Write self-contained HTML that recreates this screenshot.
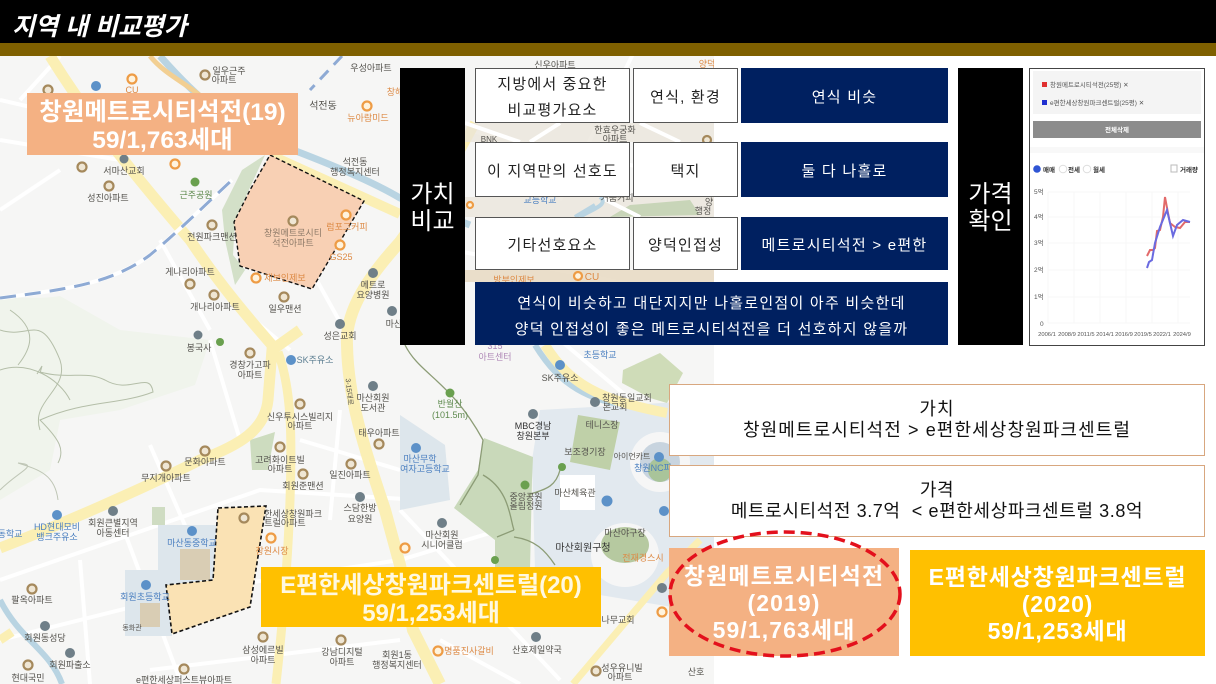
<!DOCTYPE html>
<html lang="ko"><head><meta charset="utf-8"><title>지역 내 비교평가</title>
<style>
html,body{margin:0;padding:0;background:#fff}
body{width:1216px;height:684px;overflow:hidden;position:relative;font-family:"Liberation Sans","Noto Sans CJK KR",sans-serif}
.a{position:absolute;box-sizing:border-box;display:flex;align-items:center;justify-content:center;text-align:center;white-space:nowrap}
.w{background:#fff;border:1px solid #555;color:#222;font-size:15px;line-height:26px;letter-spacing:1.2px;padding-top:4px}
.n{background:#002060;color:#fff;font-size:15px;line-height:26px;letter-spacing:1.25px;padding-top:4px}
.k{background:#000;color:#fff;font-size:24px;line-height:27px;padding-top:3px}
.o{background:#fff;border:1px solid #d8a77f;color:#111;font-size:18px;line-height:21px;letter-spacing:1.1px}
.b{color:#fff;font-weight:700;padding-top:3px}
svg text{font-family:"Liberation Sans","Noto Sans CJK KR",sans-serif}
#m text{font-size:9px;fill:#55534e;text-anchor:middle}
#m .or{fill:#dd8a45}#m .bl{fill:#4a7fc0}#m .gr{fill:#5e8a4e}#m .pu{fill:#b08ab8}
#m .p{fill:#efe6d4;stroke:#a5895c;stroke-width:2.2}
#m .q{fill:#fff3dd;stroke:#ee9c45;stroke-width:2.2}
#m .u{fill:#5c91c8;stroke:#5c91c8;stroke-width:1}
#m .g{fill:#6f7f88;stroke:#6f7f88;stroke-width:1}
#m .t{fill:#6aa04f}
</style></head><body>

<svg id="m" style="position:absolute;left:0;top:56px;filter:blur(.35px)" width="714" height="628" viewBox="0 56 714 628">
<rect x="0" y="56" width="714" height="628" fill="#f6f6f5"/>
<!-- hill -->
<path d="M0 298C20 296 35 300 60 296L120 330L210 340L195 385L120 410L60 420L50 470L0 500Z" fill="#f0f4ec"/>
<path d="M0 330C30 340 40 310 60 360C70 390 30 400 40 430M0 370C30 360 60 380 70 400M10 310C40 330 30 350 18 365M40 373L42 366L37 374M40 372C70 380 85 370 105 380C130 395 150 370 153 392C120 405 85 400 40 420C60 440 65 450 58 463" fill="none" stroke="#b4bea8" stroke-width="1"/>
<path d="M0 490C20 470 40 465 18 463C40 470 55 475 58 500" fill="none" stroke="#bfc6b6" stroke-width="1"/>
<!-- white streets -->
<g fill="none" stroke="#fff" stroke-width="4">
<path d="M0 100L130 130M0 140L120 160M60 56L20 100M0 210L60 170M160 240L210 330M210 340L240 440M300 250L350 340M230 300L290 350M150 445L200 560M0 640L200 590L400 560L500 530M120 520L180 680M0 580L260 490L420 500M80 560L90 684M150 670L400 640M300 440L400 470M340 410L330 520M400 510L560 680M440 640L520 684M600 560L714 420M620 470L600 560M560 340L714 470M640 40L560 200M420 120L700 180M400 240L714 300"/>
</g>
<!-- stream -->
<path d="M160 56C190 90 230 130 280 145C320 160 370 180 400 198L470 225" fill="none" stroke="#b9d4e2" stroke-width="7"/>
<path d="M0 600C20 640 50 650 62 684M535 345C560 385 590 410 680 410" fill="none" stroke="#b9d4e2" stroke-width="6"/>
<!-- school/sports -->
<path d="M400 415L445 445L450 500L400 510Z" fill="#dde6ec"/>
<path d="M540 410L714 400V600L690 610L570 590L535 570L532 460Z" fill="#e2e9ef"/>
<rect x="158" y="525" width="60" height="60" fill="#dde6ec"/><rect x="125" y="570" width="47" height="66" fill="#dde6ec"/>
<rect x="180" y="549" width="30" height="31" fill="#d9cdb4"/><rect x="140" y="603" width="20" height="24" fill="#d9cdb4"/>
<rect x="152" y="507" width="13" height="18" fill="#cfdcc2"/>
<path d="M623 370L660 353L683 373L667 403L650 398L622 383Z" fill="#cfdcb8"/>
<path d="M578 415L620 422L610 470L570 462Z" fill="#bfd0a8"/>
<rect x="560" y="475" width="35" height="35" fill="#fff"/>
<circle cx="660" cy="462" r="30" fill="#f6f6f6"/><circle cx="660" cy="462" r="20" fill="#c8d4df"/><circle cx="660" cy="470" r="12" fill="#a9c49a"/>
<ellipse cx="625" cy="555" rx="34" ry="32" fill="#f6f6f6"/><ellipse cx="625" cy="545" rx="24" ry="18" fill="#b6c9a0"/>
<!-- green -->
<path d="M484 438L533 457L532 480L530 570L495 570L495 540L454 508L478 470Z" fill="#c9d9ba"/>
<path d="M222 210L242 170L265 155L235 220L233 255L245 270L235 285L225 240Z" fill="#d3e0c8"/>
<path d="M250 440L275 432L268 470H252Z" fill="#cddcbf"/>
<path d="M405 345C420 375 450 380 483 440L478 475L460 505M483 475C510 490 510 520 514 530M514 530L497 537M514 537C535 540 545 550 555 565M528 495C540 490 555 490 560 470" fill="none" stroke="#8c9c76" stroke-width="1.3"/>
<!-- yellow roads -->
<g fill="none" stroke="#fbefb4" stroke-linecap="butt">
<path d="M50 56C90 120 130 170 190 240C220 285 250 320 278 352" stroke-width="11"/>
<path d="M0 548C60 525 140 490 200 460C240 445 265 430 268 400L272 350L300 330" stroke-width="11"/>
<path d="M278 352C292 390 292 440 290 500C288 560 283 620 276 684" stroke-width="9"/>
<path d="M400 242C370 275 345 310 347 345C348 400 365 450 385 510L400 565L413 630L440 684" stroke-width="12"/>
<path d="M270 155L400 214" stroke-width="10"/>
<path d="M400 242L445 180" stroke-width="12"/>
<path d="M545 345C570 385 600 400 667 413" stroke-width="10"/>
<path d="M573 684L667 573L700 540" stroke-width="7"/>
<path d="M0 640L12 632" stroke-width="9"/>
</g>
<path d="M150 56C165 75 190 85 205 100" fill="none" stroke="#f2cf92" stroke-width="5"/>
<path d="M400 250C420 220 450 170 475 123" fill="none" stroke="#fbefb4" stroke-width="10"/>
<!-- beige blocks right -->
<path d="M465 123H714V142H465ZM465 197H714V217H465Z" fill="#e9e4da" opacity=".75"/>
<path d="M465 270H714V282H465Z" fill="#e7d9c2" opacity=".85"/>
<path d="M630 205L690 200L700 215L610 217Z" fill="#c8d5b8"/>
<path d="M465 123L520 142M560 123L530 142M640 123L680 142M600 197L640 217" stroke="#fff" stroke-width="4" fill="none"/>
<path d="M595 205L575 217M600 197C610 205 590 210 580 217" stroke="#b9d4e2" stroke-width="4" fill="none"/>
<!-- rail -->
<path d="M0 298C60 290 110 285 150 255C180 230 205 205 232 180" fill="none" stroke="#fff" stroke-width="4"/>
<path d="M0 298C60 290 110 285 150 255C180 230 205 205 232 180" fill="none" stroke="#8eaad4" stroke-width="3" stroke-dasharray="16 9"/>
<path d="M342 56L310 90" fill="none" stroke="#8eaad4" stroke-width="3" stroke-dasharray="12 8"/>
<!-- polygons -->
<path d="M270 155L364 201L312 289L240 266L234 222L250 190Z" fill="#f8d0b4" stroke="#111" stroke-width="1.4" stroke-dasharray="4 2.5"/>
<path d="M218 508L266 506L250 607L172 634L166 585L213 580Z" fill="#fae2b4" stroke="#111" stroke-width="1.6" stroke-dasharray="4 2.5"/>
<!-- markers -->
<circle class="p" cx="205" cy="75" r="4.5"/><circle class="q" cx="132" cy="79" r="4.5"/><circle class="p" cx="48" cy="90" r="4.5"/><circle class="u" cx="96" cy="86" r="4.5"/><circle class="q" cx="367" cy="106" r="4.5"/><circle class="g" cx="124" cy="159" r="4"/><circle class="p" cx="82" cy="167" r="4.5"/><circle class="q" cx="175" cy="164" r="4.5"/><circle class="p" cx="109" cy="186" r="4.5"/><circle class="t" cx="195" cy="182" r="4.5"/><circle class="p" cx="212" cy="225" r="4.5"/><circle class="p" cx="293" cy="221" r="4.5"/><circle class="q" cx="346" cy="215" r="4.5"/><circle class="q" cx="340" cy="245" r="4.5"/><circle class="q" cx="256" cy="278" r="4.5"/><circle class="p" cx="190" cy="284" r="4.5"/><circle class="p" cx="214" cy="295" r="4.5"/><circle class="p" cx="284" cy="297" r="4.5"/><circle class="g" cx="373" cy="273" r="4.5"/><circle class="g" cx="340" cy="324" r="4.5"/><circle class="g" cx="392" cy="311" r="4.5"/><circle class="g" cx="198" cy="335" r="4"/><circle class="t" cx="220" cy="342" r="4"/><circle class="p" cx="250" cy="353" r="4.5"/><circle class="u" cx="291" cy="360" r="4.5"/><circle class="g" cx="373" cy="386" r="4.5"/><circle class="p" cx="379" cy="444" r="4.5"/><circle class="p" cx="300" cy="404" r="4.5"/><circle class="p" cx="280" cy="447" r="4.5"/><circle class="p" cx="303" cy="474" r="4.5"/><circle class="p" cx="351" cy="464" r="4.5"/><circle class="p" cx="205" cy="451" r="4.5"/><circle class="p" cx="166" cy="466" r="4.5"/><circle class="g" cx="360" cy="497" r="4.5"/><circle class="g" cx="113" cy="511" r="4.5"/><circle class="u" cx="57" cy="515" r="4.5"/><circle class="u" cx="192" cy="531" r="4.5"/><circle class="u" cx="146" cy="585" r="4.5"/><circle class="q" cx="271" cy="538" r="4.5"/><circle class="p" cx="244" cy="518" r="4.5"/><circle class="p" cx="32" cy="589" r="4.5"/><circle class="g" cx="45" cy="626" r="4.5"/><circle class="g" cx="70" cy="653" r="4.5"/><circle class="p" cx="28" cy="665" r="4.5"/><circle class="p" cx="184" cy="669" r="4.5"/><circle class="p" cx="263" cy="637" r="4.5"/><circle class="p" cx="341" cy="640" r="4.5"/><circle class="q" cx="438" cy="651" r="4.5"/><circle class="g" cx="536" cy="637" r="4.5"/><circle class="p" cx="596" cy="671" r="4.5"/><circle class="g" cx="442" cy="523" r="4.5"/><circle class="t" cx="450" cy="393" r="4.5"/><circle class="g" cx="533" cy="414" r="4.5"/><circle class="u" cx="560" cy="365" r="4.5"/><circle class="g" cx="595" cy="402" r="4.5"/><circle class="u" cx="416" cy="448" r="4.5"/><circle class="u" cx="659" cy="457" r="4.5"/><circle class="t" cx="525" cy="485" r="4.5"/><circle class="t" cx="562" cy="467" r="4"/><circle class="t" cx="495" cy="560" r="4"/><circle class="u" cx="607" cy="501" r="5"/><circle class="u" cx="664" cy="511" r="4.5"/><circle class="q" cx="405" cy="548" r="4.5"/><circle class="g" cx="662" cy="588" r="4.5"/><circle class="q" cx="662" cy="612" r="4.5"/><circle class="q" cx="578" cy="276" r="4"/><circle class="q" cx="470" cy="205" r="3"/><circle class="p" cx="707" cy="140" r="4"/>
<!-- labels -->
<text x="229" y="74">일우근주</text><text x="224" y="83">아파트</text><text x="371" y="71">우성아파트</text><text x="323" y="109" style="font-size:10px">석전동</text><text class="or" x="368" y="121">뉴아람미드</text><text class="or" x="395" y="95">창해</text><text class="or" x="132" y="93">CU</text><text x="355" y="165">석전동</text><text x="355" y="175">행정복지센터</text><text x="124" y="174">서마산교회</text><text x="108" y="201">성진아파트</text><text class="gr" x="196" y="198">근주공원</text><text x="212" y="240">전원파크맨션</text><text x="293" y="236" style="fill:#8d7a68">창원메트로시티</text><text x="293" y="246" style="fill:#8d7a68">석전아파트</text><text class="or" x="347" y="230">럼포그커피</text><text class="or" x="341" y="260">GS25</text><text class="or" x="285" y="281">제보인제보</text><text x="190" y="275">게나리아파트</text><text x="215" y="310">개나리아파트</text><text x="285" y="312">일우맨션</text><text x="373" y="288">메트로</text><text x="373" y="298">요양병원</text><text x="340" y="339">성은교회</text><text x="398" y="327">마산고</text><text x="199" y="351">봉국사</text><text x="250" y="368">경창가고파</text><text x="250" y="378">아파트</text><text x="315" y="363" style="fill:#5d7f92">SK주유소</text><text x="373" y="401">마산회원</text><text x="373" y="411">도서관</text><text x="379" y="436">태우아파트</text><text x="300" y="420">신우투시스빌리지</text><text x="300" y="429">아파트</text><text x="280" y="463">고려화이트빌</text><text x="280" y="472">아파트</text><text x="303" y="489">회원준맨션</text><text x="350" y="478">일진아파트</text><text x="205" y="465">문화아파트</text><text x="166" y="481">무지개아파트</text><text x="360" y="511">스담한방</text><text x="360" y="522">요양원</text><text x="113" y="526">회원큰별지역</text><text x="113" y="536">아동센터</text><text class="bl" x="57" y="530">HD현대모비</text><text class="bl" x="57" y="540">뱅크주유소</text><text class="bl" x="10" y="537">동학교</text><text class="bl" x="192" y="546">마산동중학교</text><text class="bl" x="145" y="600">회원초등학교</text><text class="or" x="272" y="554">창원시장</text><text x="293" y="517">한세상창원파크</text><text x="285" y="526">트럴아파트</text><text x="32" y="603">팔옥아파트</text><text x="45" y="641">회원동성당</text><text x="70" y="668">회원파출소</text><text x="28" y="681">현대국민</text><text x="184" y="683">e편한세상퍼스트뷰아파트</text><text x="132" y="630" style="font-size:7px">동화관</text><text x="263" y="653">삼성에르빌</text><text x="263" y="663">아파트</text><text x="342" y="655">강남디지털</text><text x="342" y="665">아파트</text><text x="397" y="658">회원1동</text><text x="397" y="668">행정복지센터</text><text class="or" x="469" y="654">명품진사갈비</text><text x="537" y="653">산호제일약국</text><text x="622" y="671">성우유니빌</text><text x="620" y="680">아파트</text><text x="618" y="623">나무교회</text><text x="696" y="675">산호</text><text x="583" y="551" style="font-size:10px;fill:#333">마산회원구청</text><text x="625" y="536">마산야구장</text><text class="or" x="643" y="561">전재경스시</text><text x="575" y="496">마산체육관</text><text x="526" y="500">중앙공원</text><text x="526" y="509">올림정원</text><text x="442" y="538">마산회원</text><text x="442" y="548">시니어클럽</text><text class="gr" x="450" y="407">반월산</text><text class="gr" x="450" y="418">(101.5m)</text><text x="533" y="429" style="fill:#333">MBC경남</text><text x="533" y="439" style="fill:#333">창원본부</text><text x="560" y="381">SK주유소</text><text x="627" y="401">창원동일교회</text><text x="615" y="410">본교회</text><text x="602" y="428">테니스장</text><text x="585" y="455">보조경기장</text><text x="632" y="459" style="font-size:8px">아이언카트</text><text class="bl" x="653" y="471">창원NC파</text><text class="bl" x="420" y="462">마산무학</text><text class="bl" x="425" y="472">여자고등학교</text><text class="pu" x="495" y="349">315</text><text class="pu" x="495" y="360">아트센터</text><text class="bl" x="600" y="358">초등학교</text><text x="555" y="68">신우아파트</text><text x="615" y="133">한효우궁화</text><text x="615" y="142">아파트</text><text class="bl" x="540" y="203">교등학교</text><text x="617" y="201">거품커피</text><text x="709" y="205">양</text><text x="703" y="214">행정</text><text class="or" x="707" y="67">양덕</text><text class="or" x="592" y="280" style="font-size:10px">CU</text><text class="or" x="514" y="283">방부인제보</text><text x="489" y="142" style="font-size:8px">BNK</text>
<text x="347" y="392" transform="rotate(84 347 392)" style="font-size:7px">3-15대로</text>
</svg>

<!-- header -->
<div class="a" style="left:0;top:0;width:1216px;height:43px;background:#000"></div>
<div class="a" style="left:0;top:43px;width:1216px;height:13px;background:#7f6000"></div>
<div class="a" style="left:12px;top:6px;height:38px;color:#fff;font-size:25px;font-style:italic;font-weight:700;justify-content:flex-start">지역 내 비교평가</div>

<!-- labels on map -->
<div class="a b" style="left:27px;top:93px;width:271px;height:62px;background:#f4b183;font-size:24.5px;line-height:28px;padding-top:5px">창원메트로시티석전(19)<br>59/1,763세대</div>
<div class="a b" style="left:261px;top:567px;width:340px;height:60px;background:#ffc000;font-size:24px;line-height:28px;color:#fff8e0;padding-top:6px">E편한세상창원파크센트럴(20)<br>59/1,253세대</div>

<!-- table -->
<div class="a k" style="left:400px;top:68px;width:65px;height:277px">가치<br>비교</div>
<div class="a w" style="left:475px;top:68px;width:155px;height:55px">지방에서 중요한<br>비교평가요소</div>
<div class="a w" style="left:633px;top:68px;width:105px;height:55px">연식, 환경</div>
<div class="a n" style="left:741px;top:68px;width:207px;height:55px">연식 비슷</div>
<div class="a w" style="left:475px;top:142px;width:155px;height:55px">이 지역만의 선호도</div>
<div class="a w" style="left:633px;top:142px;width:105px;height:55px">택지</div>
<div class="a n" style="left:741px;top:142px;width:207px;height:55px">둘 다 나홀로</div>
<div class="a w" style="left:475px;top:217px;width:155px;height:53px">기타선호요소</div>
<div class="a w" style="left:633px;top:217px;width:105px;height:53px">양덕인접성</div>
<div class="a n" style="left:741px;top:217px;width:207px;height:53px">메트로시티석전 &gt; e편한</div>
<div class="a n" style="left:475px;top:282px;width:473px;height:63px;padding-top:6px">연식이 비슷하고 대단지지만 나홀로인점이 아주 비슷한데<br>양덕 인접성이 좋은 메트로시티석전을 더 선호하지 않을까</div>
<div class="a k" style="left:958px;top:68px;width:65px;height:277px">가격<br>확인</div>

<!-- chart -->
<svg style="position:absolute;left:1029px;top:68px;filter:blur(.3px)" width="176" height="278" viewBox="1029 68 176 278">
<rect x="1029.5" y="68.5" width="175" height="277" fill="#fff" stroke="#444"/>
<rect x="1033" y="71" width="168" height="43" fill="#f4f4f4"/>
<rect x="1033" y="121" width="168" height="17" fill="#8c8c8c"/>
<rect x="1030" y="147" width="174" height="6" fill="#f8f8f8"/>
<rect x="1042" y="82" width="5" height="5" fill="#e03030"/><rect x="1042" y="100" width="5" height="5" fill="#2030d0"/>
<g font-size="6.5" fill="#555"><text x="1050" y="87">창원메트로시티석전(25평) ✕</text><text x="1050" y="105">e편한세상창원파크센트럴(25평) ✕</text></g>
<text x="1117" y="132" font-size="6.5" fill="#fff" text-anchor="middle" font-weight="700">전체삭제</text>
<circle cx="1037" cy="169" r="3.8" fill="#2f55d4"/><circle cx="1063" cy="169" r="3.8" fill="#fff" stroke="#ddd"/><circle cx="1087" cy="169" r="3.8" fill="#fff" stroke="#ddd"/>
<g font-size="6.5" fill="#333" font-weight="700"><text x="1043" y="172">매매</text><text x="1068" y="172">전세</text><text x="1093" y="172">월세</text><text x="1180" y="172">거래량</text></g>
<rect x="1171" y="165" width="6" height="7" fill="#fff" stroke="#bbb"/>
<g stroke="#f7f7f7" stroke-width="1"><path d="M1048 192H1190M1048 217H1190M1048 243H1190M1048 270H1190M1048 297H1190M1048 323H1190M1048 192V323M1074 192V323M1100 192V323M1126 192V323M1152 192V323M1178 192V323"/></g>
<g font-size="6.5" fill="#555"><text x="1034" y="194">5억</text><text x="1034" y="219">4억</text><text x="1034" y="245">3억</text><text x="1034" y="272">2억</text><text x="1034" y="299">1억</text><text x="1040" y="326">0</text></g>
<g font-size="5.8" fill="#555" text-anchor="middle"><text x="1047" y="336">2006/1</text><text x="1067" y="336">2008/9</text><text x="1086" y="336">2011/5</text><text x="1105" y="336">2014/1</text><text x="1124" y="336">2016/9</text><text x="1143" y="336">2019/5</text><text x="1162" y="336">2022/1</text><text x="1182" y="336">2024/9</text></g>
<polyline points="1147,256 1150,250 1153,250 1155,248 1157,231 1160,230 1163,217 1165,197 1168,213 1170,223 1175,227 1180,228 1185,222 1190,222" fill="none" stroke="#e26a6a" stroke-width="2"/>
<polyline points="1147,268 1149,262 1152,260 1155,243 1160,227 1167,210 1170,223 1173,236 1177,225 1183,220 1190,222" fill="none" stroke="#6a6ae0" stroke-width="2"/>
</svg>

<!-- results -->
<div class="a o" style="left:669px;top:384px;width:536px;height:72px">가치<br>창원메트로시티석전 &gt; e편한세상창원파크센트럴</div>
<div class="a o" style="left:669px;top:465px;width:536px;height:72px;letter-spacing:.6px">가격<br>메트로시티석전 3.7억 &nbsp;&lt; e편한세상파크센트럴 3.8억</div>
<div class="a b" style="left:669px;top:548px;width:230px;height:108px;background:#f4b183;font-size:23px;line-height:27px;letter-spacing:1.1px">창원메트로시티석전<br>(2019)<br>59/1,763세대</div>
<div class="a b" style="left:910px;top:550px;width:295px;height:106px;background:#ffc000;font-size:23px;line-height:27px;letter-spacing:.8px">E편한세상창원파크센트럴<br>(2020)<br>59/1,253세대</div>
<svg style="position:absolute;left:660px;top:525px" width="250" height="140"><ellipse cx="125" cy="69" rx="115" ry="62" fill="none" stroke="#e3101c" stroke-width="3.5" stroke-dasharray="11 6"/></svg>
</body></html>
